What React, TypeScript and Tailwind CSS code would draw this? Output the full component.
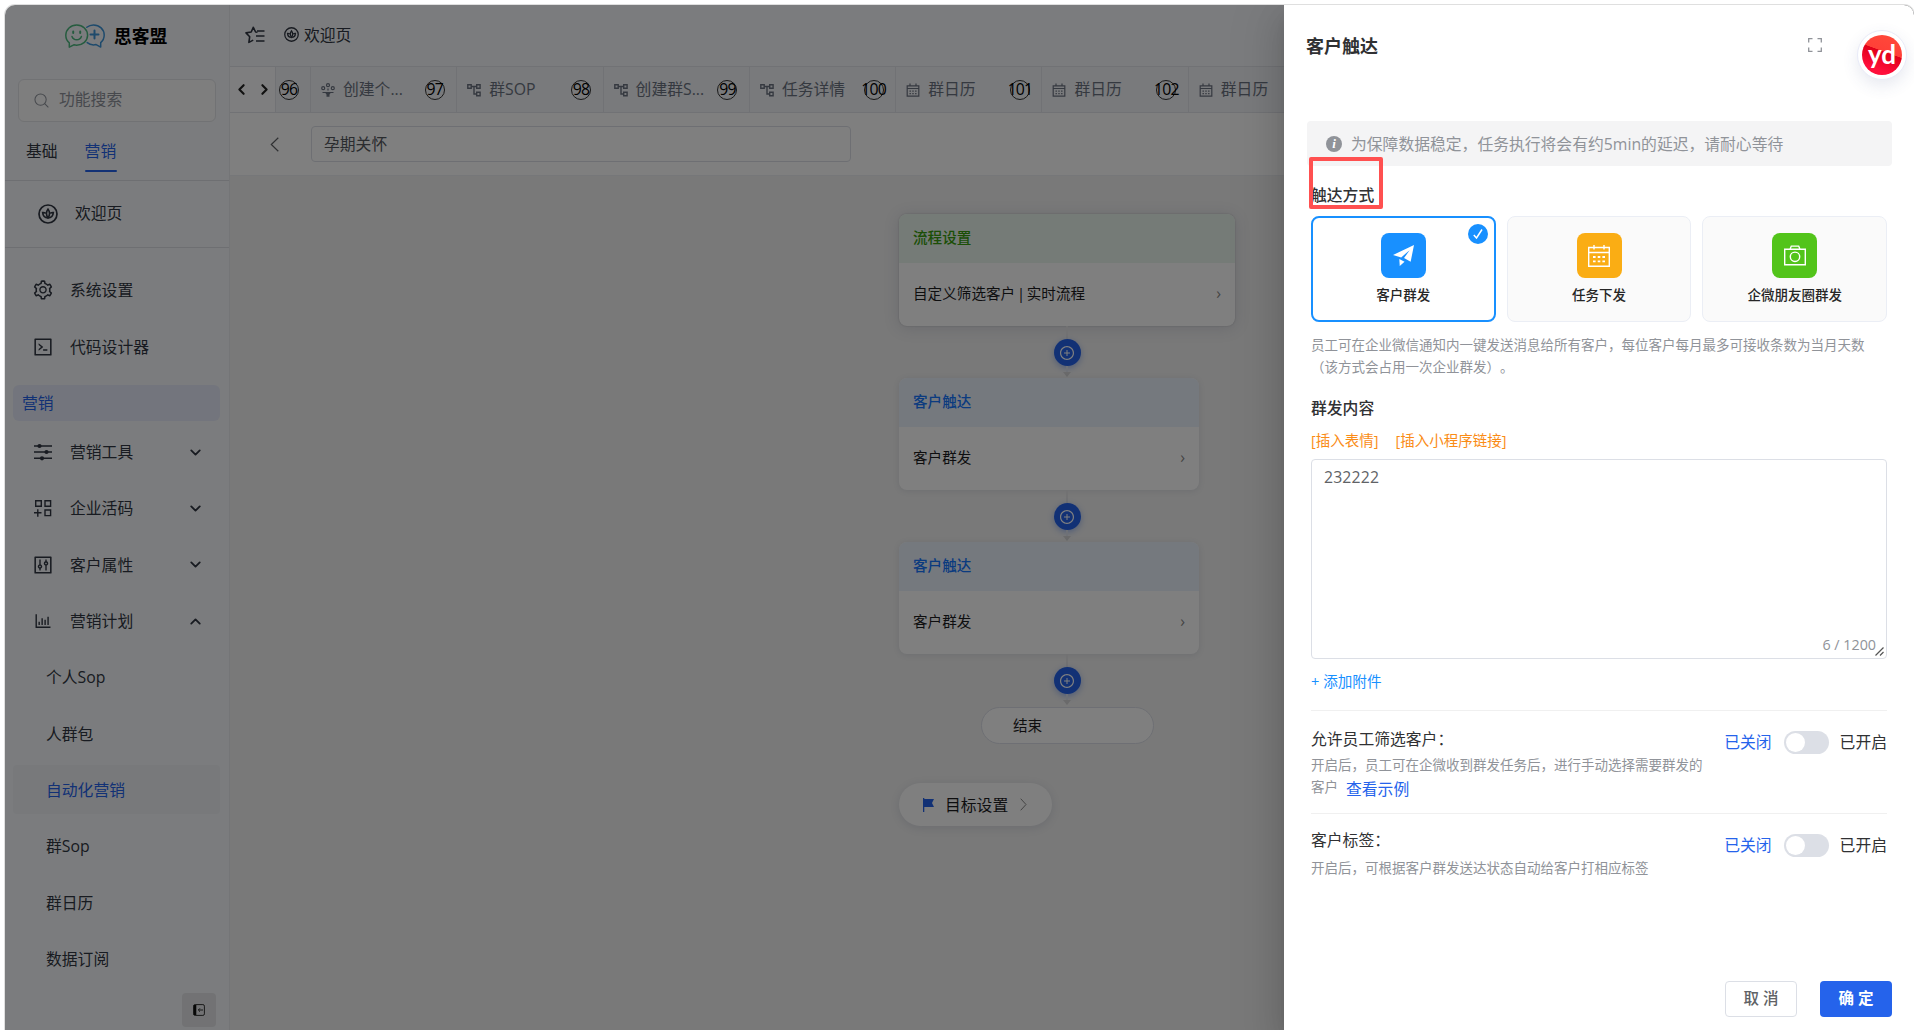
import React from 'react';
import {
  AiOutlineBarChart,
  AiOutlineCode,
  AiOutlineControl,
  AiOutlinePlusCircle,
  AiOutlineSetting,
} from 'react-icons/ai';
import { ChevronDown, ChevronLeft, ChevronRight, ChevronUp } from 'lucide-react';

type IconProps = { className?: string };

const LotusIcon = ({ className }: IconProps) => (
  <svg viewBox="0 0 20 20" className={className} fill="none" stroke="currentColor" strokeWidth="1.7">
    <circle cx="10" cy="10" r="9" />
    <path d="M10 5.2c-2 2.6-2 5.8 0 8.6 2-2.8 2-6 0-8.6z" />
    <path d="M7.8 9.4c-1-.8-2-1-3.1-.9.2 3.3 2.2 5.3 5.3 5.3 3.1 0 5.1-2 5.3-5.3-1.1-.1-2.1.1-3.1.9" />
  </svg>
);

const SearchIcon = ({ className }: IconProps) => (
  <svg viewBox="0 0 16 16" className={className} fill="none" stroke="currentColor" strokeWidth="1.1">
    <circle cx="7" cy="7" r="6" />
    <path d="M11.4 11.4 15.3 15.3" />
  </svg>
);

const StarMenuIcon = ({ className }: IconProps) => (
  <svg viewBox="0 0 20 18" className={className} fill="none" stroke="currentColor" strokeWidth="1.6" strokeLinejoin="round">
    <path d="M12.5 6.3 10.6 6 8.3 1.3 6.2 6 1 6.9l3.7 3.8-.8 5.7 4.3-2.3" />
    <path d="M12 5h7.5M11 10h8.5M11 15h8.5" />
  </svg>
);

const SlidersIcon = ({ className }: IconProps) => (
  <svg viewBox="0 0 18 18" className={className} fill="none" stroke="currentColor" strokeWidth="1.4">
    <path d="M0 3h18M0 9h18M0 15.3h18" />
    <g fill="currentColor" stroke="none">
      <circle cx="5.5" cy="3" r="2.1" />
      <circle cx="12.5" cy="9" r="2.1" />
      <circle cx="8" cy="15.3" r="2.1" />
    </g>
  </svg>
);

const GridAddIcon = ({ className }: IconProps) => (
  <svg viewBox="0 0 18 18" className={className} fill="none" stroke="currentColor" strokeWidth="1.4">
    <path d="M1.7 1.7h5.6v5.6H1.7zM11 1.7h5.6v5.6H11zM11 11h5.6v5.6H11zM0 13.8h7.5M3.8 10.3v7.4" />
  </svg>
);

const TreeIcon = ({ className }: IconProps) => (
  <svg viewBox="0 0 14 14" className={className} fill="none" stroke="currentColor" strokeWidth="1.4">
    <path d="M.8 1.8h3.4v3.4H.8zM9.7 1.8h3.4v3.4H9.7zM9.7 9.3h3.4v3.4H9.7zM4.2 3.5h5.5M7 3.5V11h2.7" />
  </svg>
);

const SproutIcon = ({ className }: IconProps) => (
  <svg viewBox="0 0 14 14" className={className} fill="none" stroke="currentColor" strokeWidth="1.2">
    <circle cx="7" cy="2.2" r="1.5" />
    <circle cx="2.2" cy="5.2" r="1.5" />
    <circle cx="11.8" cy="5.2" r="1.5" />
    <path d="M7 5.5v2M1.5 9.5h11" />
    <path d="M4 9.5h6l-1.5 2v2.3h-3v-2.3z" fill="currentColor" stroke="none" />
  </svg>
);

const CalendarIcon = ({ className }: IconProps) => (
  <svg viewBox="0 0 14 14" className={className} fill="none" stroke="currentColor" strokeWidth="1.2">
    <path d="M1.2 2.8h11.6v10.4H1.2zM1.2 5.5h11.6M4 .5v2.5M10 .5v2.5" />
    <path d="M3.5 8.2h7M3.5 10.6h7" strokeDasharray="1.4 1.4" />
  </svg>
);

const ExpandIcon = ({ className }: IconProps) => (
  <svg viewBox="0 0 14 14" className={className} fill="none" stroke="currentColor" strokeWidth="1.3">
    <path d="M.7 4.5V.7h3.8M9.5.7h3.8v3.8M13.3 9.5v3.8H9.5M4.5 13.3H.7V9.5" />
  </svg>
);

const Logo = () => (
  <svg viewBox="0 0 40 24" className="w-10 h-6" fill="none" strokeWidth="1.5" strokeLinecap="round" strokeLinejoin="round">
    <path stroke="#4db87f" d="M4.3 23.2v-4.4C2 17 .8 14.3.8 11.3.8 5.5 5.7.9 11.7.9s10.9 4.6 10.9 10.4-4.9 9.9-10.9 9.9c-1 0-2-.1-2.9-.4z" />
    <path stroke="#4db87f" d="M7 12.5c.8 2.2 2.6 3.3 4.7 3.3s3.9-1.1 4.7-3.3" />
    <path stroke="#4db87f" strokeWidth="2" d="M8.2 7.5v1.5M15.2 7.5v1.5" />
    <path stroke="#3d94d8" d="M21.8 3.3C23.7 1.7 26 .9 28.5.9c6 0 10.7 4.6 10.7 10.1 0 3-1.3 5.8-3.5 7.6v4.5l-4.6-2.5c-3.3.7-6.5 0-8.9-2" />
    <path stroke="#3d94d8" strokeWidth="2" d="M29.5 6.5v8M25.5 10.5h8" />
  </svg>
);

const menu = [
  { label: '营销工具', icon: <SlidersIcon className="w-[18px] h-[18px]" />, open: false },
  { label: '企业活码', icon: <GridAddIcon className="w-[18px] h-[18px]" />, open: false },
  { label: '客户属性', icon: <AiOutlineControl className="size-[22px] -m-0.5" />, open: false },
  { label: '营销计划', icon: <AiOutlineBarChart className="size-[20px] -m-px" />, open: true },
];

const subMenu = ['个人Sop', '人群包', '自动化营销', '群Sop', '群日历', '数据订阅'];

const tabs = [
  { label: '创建个...', no: '97', icon: <SproutIcon className="size-3.5" /> },
  { label: '群SOP', no: '98', icon: <TreeIcon className="size-3.5" /> },
  { label: '创建群S...', no: '99', icon: <TreeIcon className="size-3.5" /> },
  { label: '任务详情', no: '100', icon: <TreeIcon className="size-3.5" /> },
  { label: '群日历', no: '101', icon: <CalendarIcon className="size-3.5" /> },
  { label: '群日历', no: '102', icon: <CalendarIcon className="size-3.5" /> },
  { label: '群日历', no: '103', icon: <CalendarIcon className="size-3.5" /> },
];

const Sidebar = () => (
  <aside className="flex flex-col w-[225px] shrink-0 bg-[#f7f9fc] border-r border-[#e8eaee] text-[#303642]">
    <div className="flex items-center gap-[9px] h-[62px] pl-[60px] pb-px">
      <Logo />
      <span className="text-[17.8px] font-bold text-black">思客盟</span>
    </div>
    <div className="flex items-center gap-[10px] h-[43px] mx-[13px] mt-3 mb-1 pl-[15px] pb-[3px] rounded-md border border-[#e2e4e8] bg-[#fcfcfd] w-[198px] text-[#8e929a]">
      <SearchIcon className="w-[15px] h-[15px] mt-[3px]" />
      <span>功能搜索</span>
    </div>
    <div className="flex gap-[27px] h-[55px] pl-[21px] pt-[13px] border-b border-[#dcdfe4]">
      <span className="h-[35px]">基础</span>
      <span className="relative h-[35px] text-[#2563eb]">
        营销
        <i className="absolute left-0 bottom-0.5 h-0.5 w-8 rounded bg-[#2563eb]" />
      </span>
    </div>
    <div className="flex items-center gap-[17px] h-[67px] pl-[33px] border-b border-[#dcdfe4]">
      <LotusIcon className="size-5" />
      <span className="-mt-0.5">欢迎页</span>
    </div>
    <div className="flex items-center gap-4 h-[57px] mt-[13px] pl-[27px]">
      <AiOutlineSetting className="size-[22px]" />
      <span>系统设置</span>
    </div>
    <div className="flex items-center gap-4 h-[57px] pl-[27px]">
      <AiOutlineCode className="size-[22px]" />
      <span>代码设计器</span>
    </div>
    <div className="flex items-center h-9 ml-2 mr-[9px] mt-[10px] mb-[3px] pl-[9px] rounded-md bg-[#e6ebfa] text-[#2563eb]">营销</div>
    {menu.map((item) => (
      <div key={item.label} className="flex items-center h-[56.3px] pl-[29px] pr-[25px]">
        {item.icon}
        <span className="ml-[18px] flex-1">{item.label}</span>
        {item.open ? <ChevronUp className="size-[17px]" strokeWidth={2.6} /> : <ChevronDown className="size-[17px]" strokeWidth={2.6} />}
      </div>
    ))}
    {subMenu.map((label) => (
      <div key={label} className="flex items-center h-[56.3px] pl-2 pr-[9px]">
        <div
          className={
            label === '自动化营销'
              ? 'flex items-center w-full h-[49px] pl-[33px] rounded bg-[#f0f2f7] text-[#2563eb]'
              : 'flex items-center w-full h-[49px] pl-[33px]'
          }
        >
          {label}
        </div>
      </div>
    ))}
    <div className="flex items-center justify-center self-end mr-[13px] mt-1.5 size-[34px] rounded bg-[#e4e5e8]">
      <svg viewBox="0 0 12 12" className="size-3" fill="none" stroke="#333" strokeWidth="1">
        <rect x=".6" y=".6" width="10.8" height="10.8" rx="1.5" />
        <path d="M2 1v10" strokeWidth="2.6" stroke="#111" />
        <path d="M10 6H5.5M7 4.3 5.3 6 7 7.7" />
      </svg>
    </div>
  </aside>
);

const Badge = ({ no }: { no: string }) => (
  <span className="flex items-center justify-center size-5 rounded-full border border-[#333] pb-0.5 text-black tracking-[-0.8px] whitespace-nowrap">{no}</span>
);

const NodeCard = ({ title, text, wide }: { title: string; text: string; wide?: boolean }) => (
  <div
    className={
      wide
        ? 'w-[336px] h-28 rounded-lg overflow-hidden bg-white shadow-[0_2px_16px_rgba(60,70,110,0.16),0_0_2px_rgba(0,0,0,0.2)]'
        : 'w-[300px] h-28 rounded-lg overflow-hidden bg-white shadow-[0_1px_6px_rgba(60,70,110,0.12)]'
    }
  >
    <div
      className={
        wide
          ? 'flex items-center h-[49px] px-3.5 pb-[3px] font-medium bg-[#ebf7ef] text-[#389e0d]'
          : 'flex items-center h-[49px] px-3.5 pb-[3px] font-medium bg-[#ebf2fc] text-[#1677ff]'
      }
    >
      {title}
    </div>
    <div className="flex items-center justify-between h-[63px] pl-3.5 pr-3.5 pb-[3px] text-[#1d1d1f]">
      <span className="[word-spacing:-2px]">{text}</span>
      <span className="text-[#888] text-base">›</span>
    </div>
  </div>
);

const Connector = () => (
  <div className="flex flex-col items-center w-[336px] h-[52px]">
    <i className="w-0.5 h-[13px] bg-[#e4e4e6]" />
    <span className="flex items-center justify-center size-[27px] rounded-full bg-[#2563eb] text-white shadow-[0_2px_6px_rgba(37,99,235,0.4)]">
      <AiOutlinePlusCircle className="size-4" />
    </span>
    <i className="w-0.5 h-[6px] bg-[#dde3ee]" />
    <svg viewBox="0 0 8 5" className="w-2 h-[5px]"><path d="M0 0h8L4 5z" fill="#d4d4d6" /></svg>
  </div>
);

const Workspace = () => (
  <main className="flex flex-col flex-1 min-w-0 bg-[#f2f2f2]">
    <div className="flex items-center h-[62px] pl-[15px] pb-0.5 bg-[#f7f9fc] border-b border-[#e2e5ea] text-[#303642]">
      <StarMenuIcon className="w-5 h-[18px] mr-[19px]" />
      <LotusIcon className="w-[15px] h-[15px] mr-[5px]" />
      <span>欢迎页</span>
    </div>
    <div className="flex h-[46px] overflow-hidden bg-[#f2f4f8] border-b border-[#e2e5ea] text-[#6b7280]">
      <div className="flex items-center justify-center gap-1.5 w-[46px] shrink-0 bg-[#fdfdfe] border-r border-[#e2e5ea] text-[#222]">
        <ChevronLeft className="size-[17px]" strokeWidth={3} />
        <ChevronRight className="size-[17px]" strokeWidth={3} />
      </div>
      <div className="flex items-center w-[35px] pl-[3px] shrink-0 border-r border-[#e2e5ea]">
        <Badge no="96" />
      </div>
      {tabs.map((tab) => (
        <div key={tab.no} className="flex items-center w-[146.3px] shrink-0 pl-[10px] pr-[11.5px] border-r border-[#e2e5ea]">
          {tab.icon}
          <span className="ml-2 flex-1 -mt-0.5 whitespace-nowrap">{tab.label}</span>
          <Badge no={tab.no} />
        </div>
      ))}
    </div>
    <div className="flex items-center h-[63px] pl-[37px] bg-white border-b border-[#eceef2]">
      <svg viewBox="0 0 9 15" className="w-[9px] h-[15px] mr-8 ml-[3px]" fill="none" stroke="#606266" strokeWidth="1.2">
        <path d="M8.3.7 1.3 7.5l7 6.8" />
      </svg>
      <div className="flex items-center w-[540px] h-9 pl-3 rounded border border-[#dcdfe6] text-[#55585e]">孕期关怀</div>
    </div>
    <div className="flex flex-col flex-1 pl-[669px] pt-[38px] text-[14.6px]">
      <NodeCard wide title="流程设置" text="自定义筛选客户 | 实时流程" />
      <Connector />
      <NodeCard title="客户触达" text="客户群发" />
      <Connector />
      <NodeCard title="客户触达" text="客户群发" />
      <Connector />
      <div className="flex items-center w-[173px] h-[37px] mt-px ml-[82px] pl-[31px] pb-0.5 rounded-full border border-[#dcdfe8] bg-white text-[#1d1d1f]">结束</div>
      <div className="flex items-center w-[153px] h-[43px] mt-[39px] pl-6 rounded-full bg-white shadow-[0_2px_10px_rgba(60,70,110,0.14)] text-[15.8px] text-[#1d1d1f]">
        <svg viewBox="0 0 11 14" className="w-[11px] h-3.5 mr-[11px]" fill="#2563eb">
          <path d="M0 0h1.3v14H0zM1.3 1h9.7L9 5l2 4H1.3z" />
        </svg>
        目标设置
        <svg viewBox="0 0 7 13" className="w-[7px] h-[13px] ml-3" fill="none" stroke="#888">
          <path d="M.7.7 6 6.5.7 12.3" />
        </svg>
      </div>
    </div>
  </main>
);

const channels = [
  {
    label: '客户群发',
    box: 'flex items-center justify-center size-[45px] rounded-lg bg-[#1890ff]',
    icon: (
      <svg viewBox="0 0 20 20" className="w-[21px] h-[21px]" fill="#fff">
        <path d="M0 9.5 20 0l-3.2 16-6.3-3.5L15.8 5 7.8 11.8z" />
        <path d="M6 13.3 11 16l-4.6 4z" />
      </svg>
    ),
  },
  {
    label: '任务下发',
    box: 'flex items-center justify-center size-[45px] ml-px rounded-lg bg-[#faad14]',
    icon: (
      <svg viewBox="0 0 22 22" className="w-[22px] h-[22px]" fill="none" stroke="#fff" strokeWidth="1.4">
        <path d="M.7 2.5h20.6v18.8H.7zM.7 7.5h20.6M6 0v4.5M16 0v4.5" />
        <path d="M5 12h12M5 16.3h12" strokeWidth="1.8" strokeDasharray="2.6 2.1" />
      </svg>
    ),
  },
  {
    label: '企微朋友圈群发',
    box: 'flex items-center justify-center size-[45px] rounded-lg bg-[#52c41a]',
    icon: (
      <svg viewBox="0 0 22 22" className="w-[22px] h-[22px]" fill="none" stroke="#fff" strokeWidth="1.4">
        <path d="M.7 4.3h20.6v15.5H.7zM6 4.3l1.3-3.2h7.4L16 4.3" />
        <circle cx="11" cy="11.8" r="4.7" />
      </svg>
    ),
  },
];

const ToggleRow = () => (
  <div className="flex items-center h-6">
    <span className="text-[#2563eb]">已关闭</span>
    <span className="flex items-center w-[45px] h-[23px] ml-3 mr-[11px] pl-0.5 rounded-full bg-[#dcdfe6]">
      <i className="size-[19px] rounded-full bg-white" />
    </span>
    <span className="text-[#303133]">已开启</span>
  </div>
);

const Drawer = () => (
  <section className="absolute top-0 right-0 bottom-0 w-[630px] flex flex-col pl-[23px] pr-[22px] bg-white rounded-tr-[10px] shadow-[0_16px_48px_16px_rgba(0,0,0,0.08),0_12px_32px_rgba(0,0,0,0.12),0_8px_16px_-8px_rgba(0,0,0,0.16)] text-[#303133]">
    <div className="flex items-start h-[116px]">
      <h2 className="flex-1 mt-[29px] -ml-px leading-6 text-[18px] font-bold">客户触达</h2>
      <ExpandIcon className="w-3.5 h-3.5 mt-[33px] mr-[35px] text-[#909399]" />
      <div className="flex items-center justify-center size-[50px] mt-[25px] mr-[-15px] rounded-full border border-[#e9ebf8] bg-white shadow-[0_6px_16px_rgba(60,70,130,0.12)]">
        <span className="flex items-center justify-center size-10 rounded-full bg-[linear-gradient(200deg,#ff4a3a_0%,#ff4038_42%,#e00018_43%,#ff0f3c_80%)] text-white font-[family-name:Lato] font-bold text-[26px] leading-none pb-[3px]">
          yd
        </span>
      </div>
    </div>
    <div className="flex items-center h-[45px] pl-[19px] rounded bg-[#f4f4f5] text-[#909399]">
      <span className="flex items-center justify-center size-4 mr-[9px] rounded-full bg-[#909399] text-white font-[family-name:Liberation_Serif] italic font-bold text-[13px] leading-none">i</span>
      <span>为保障数据稳定，任务执行将会有约5min的延迟，请耐心等待</span>
    </div>
    <div className="flex flex-col pl-1 pr-[5px]">
      <div className="relative mt-[17px] h-6 leading-6 font-medium">
        触达方式
        <i className="absolute left-[-2px] top-[-26px] w-[74px] h-[52px] rounded-xs border-[4.5px] border-[#ff5050]" />
      </div>
      <div className="grid grid-cols-3 gap-[11px] mt-[9px]">
        {channels.map((c, i) => (
          <div
            key={c.label}
            className={
              i === 0
                ? 'relative flex flex-col items-center h-[106px] pt-[15px] rounded-lg border-2 border-[#1890ff] bg-white'
                : 'relative flex flex-col items-center h-[106px] pt-4 rounded-lg border border-[#ebeef5] bg-[#fafafa]'
            }
          >
            <span className={c.box}>{c.icon}</span>
            <span className="mt-[7px] leading-5 text-[13.5px] font-medium text-[#262626]">{c.label}</span>
            {i === 0 && (
              <span className="absolute right-[6px] top-[6px] flex items-center justify-center size-5 rounded-full bg-[#1890ff]">
                <svg viewBox="0 0 10 10" className="size-2.5" fill="none" stroke="#fff" strokeWidth="1.5">
                  <path d="M.8 6 3.5 9 9 .5" />
                </svg>
              </span>
            )}
          </div>
        ))}
      </div>
      <p className="mt-3 leading-[22px] text-[13.5px] text-[#909399]">
        员工可在企业微信通知内一键发送消息给所有客户，每位客户每月最多可接收条数为当月天数
        <br />
        （该方式会占用一次企业群发）。
      </p>
      <h3 className="mt-[18px] leading-6 font-medium">群发内容</h3>
      <div className="flex gap-[17px] mt-[9px] leading-6 text-[14.5px] text-[#fa8c16]">
        <span>[插入表情]</span>
        <span>[插入小程序链接]</span>
      </div>
      <div className="relative flex flex-col justify-between h-[200px] mt-1.5 pl-3 pr-[10px] pt-[5px] pb-px rounded border border-[#dcdfe6]">
        <span className="leading-6 tracking-[0.15px] text-[#606266]">232222</span>
        <span className="leading-6 self-end text-[14.3px] text-[#909399]">6 / 1200</span>
        <svg viewBox="0 0 9 9" className="absolute right-0.5 bottom-0.5 size-[9px]" stroke="#555" strokeWidth="1.2">
          <path d="M.5 8.5l8-8M5 8.5 8.5 5" />
        </svg>
      </div>
      <div className="mt-[10px] leading-6 text-[14.6px] text-[#1890ff]">+ 添加附件</div>
      <div className="flex justify-between h-[103px] mt-[17px] pt-4 border-t border-[#f0f0f0]">
        <div className="w-[400px]">
          <div className="leading-6">允许员工筛选客户：</div>
          <p className="mt-[3px] leading-[22px] text-[13.5px] text-[#909399]">
            开启后，员工可在企微收到群发任务后，进行手动选择需要群发的客户
            <a className="ml-2 text-[15.8px] text-[#2563eb] align-[-3px]">查看示例</a>
          </p>
        </div>
        <div className="mt-[3px]"><ToggleRow /></div>
      </div>
      <div className="flex justify-between pt-[14px] border-t border-[#f0f0f0]">
        <div className="w-[400px]">
          <div className="leading-6">客户标签：</div>
          <p className="mt-[5px] leading-[22px] text-[13.5px] text-[#909399]">开启后，可根据客户群发送达状态自动给客户打相应标签</p>
        </div>
        <div className="mt-[5px]"><ToggleRow /></div>
      </div>
    </div>
    <div className="flex justify-end gap-[23px] mt-auto mb-[13px] text-[15.5px] font-medium [word-spacing:2px]">
      <button className="w-[72px] h-9 pb-0.5 rounded border border-[#dcdfe6] text-[#606266]">取 消</button>
      <button className="w-[72px] h-9 pb-0.5 rounded bg-[#2563eb] text-white font-bold">确 定</button>
    </div>
  </section>
);

export default function App() {
  return (
    <div className="h-[1030px] w-[1914px] overflow-hidden bg-white pl-[5px] pt-[5px] font-['Open_Sans','Noto_Sans_CJK_SC',sans-serif] text-[15.8px] leading-6 [text-spacing-trim:space-all]">
      <div className="relative flex h-[1025px] overflow-hidden rounded-t-[10px] shadow-[0_0_0_1px_#dfdfdf]">
        <Sidebar />
        <Workspace />
        <div className="absolute inset-0 bg-black/50" />
        <Drawer />
      </div>
    </div>
  );
}
